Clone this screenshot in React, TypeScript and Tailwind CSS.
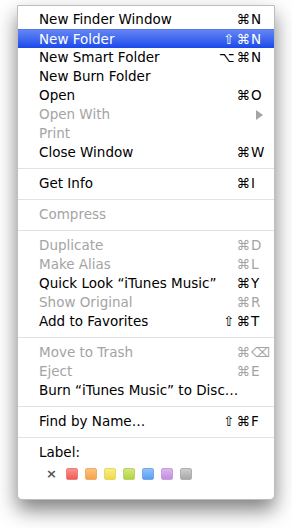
import React from 'react';

type Item =
  | { kind: 'sep' }
  | {
      kind: 'item';
      label: string;
      mods?: string;
      keyCap?: string;
      disabled?: boolean;
      active?: boolean;
      submenu?: boolean;
    };

const ITEMS: Item[] = [
  { kind: 'item', label: 'New Finder Window', mods: '⌘', keyCap: 'N' },
  { kind: 'item', label: 'New Folder', mods: '⇧⌘', keyCap: 'N', active: true },
  { kind: 'item', label: 'New Smart Folder', mods: '⌥⌘', keyCap: 'N' },
  { kind: 'item', label: 'New Burn Folder' },
  { kind: 'item', label: 'Open', mods: '⌘', keyCap: 'O' },
  { kind: 'item', label: 'Open With', disabled: true, submenu: true },
  { kind: 'item', label: 'Print', disabled: true },
  { kind: 'item', label: 'Close Window', mods: '⌘', keyCap: 'W' },
  { kind: 'sep' },
  { kind: 'item', label: 'Get Info', mods: '⌘', keyCap: 'I' },
  { kind: 'sep' },
  { kind: 'item', label: 'Compress', disabled: true },
  { kind: 'sep' },
  { kind: 'item', label: 'Duplicate', mods: '⌘', keyCap: 'D', disabled: true },
  { kind: 'item', label: 'Make Alias', mods: '⌘', keyCap: 'L', disabled: true },
  { kind: 'item', label: 'Quick Look “iTunes Music”', mods: '⌘', keyCap: 'Y' },
  { kind: 'item', label: 'Show Original', mods: '⌘', keyCap: 'R', disabled: true },
  { kind: 'item', label: 'Add to Favorites', mods: '⇧⌘', keyCap: 'T' },
  { kind: 'sep' },
  { kind: 'item', label: 'Move to Trash', mods: '⌘', keyCap: '⌫', disabled: true },
  { kind: 'item', label: 'Eject', mods: '⌘', keyCap: 'E', disabled: true },
  { kind: 'item', label: 'Burn “iTunes Music” to Disc…' },
  { kind: 'sep' },
  { kind: 'item', label: 'Find by Name…', mods: '⇧⌘', keyCap: 'F' },
  { kind: 'sep' },
];

const SWATCHES = [
  'from-[#fb8f8b] to-[#f25a55] border-[#e8807c]',
  'from-[#fcc27c] to-[#f5a24a] border-[#eeae6a]',
  'from-[#f8ee82] to-[#eedb45] border-[#e5d86a]',
  'from-[#d3e77e] to-[#b2d344] border-[#b9d46a]',
  'from-[#8fc2fb] to-[#5a9cf4] border-[#78a8e8]',
  'from-[#dcb6ee] to-[#c18fdd] border-[#c5a0dc]',
  'from-[#cdcdcd] to-[#a9a9a9] border-[#b0b0b0]',
];

function MenuRow({ item }: { item: Extract<Item, { kind: 'item' }> }) {
  const color = item.active ? 'text-white' : item.disabled ? 'text-[#a4a4a4]' : 'text-black';
  const mods = item.mods ? Array.from(item.mods) : [];
  return (
    <div
      className={`flex h-[19px] items-center pl-[21px] ${color} ${
        item.active ? 'bg-gradient-to-b from-[#6584f4] to-[#1a48ea] border-t border-[#5577ef]' : ''
      }`}
    >
      <span className="flex-1 whitespace-nowrap">{item.label}</span>
      <span className="flex whitespace-nowrap">
        {mods.map((m, i) => (
          <span key={i} className={i < mods.length - 1 ? 'mr-[2px]' : ''}>
            {m}
          </span>
        ))}
      </span>
      <span className="flex w-[24px] items-center pl-[1px] whitespace-nowrap">
        {item.keyCap}
        {item.submenu ? (
          <svg className="ml-[5px]" width="7" height="10" viewBox="0 0 7 10">
            <path d="M0 0 L7 5 L0 10 Z" fill="#a4a4a4" />
          </svg>
        ) : null}
      </span>
    </div>
  );
}

export default function App() {
  return (
    <div className="h-[528px] w-[292px] bg-white pl-[17px] pt-[5px]" style={{ fontFamily: '"DejaVu Sans", sans-serif' }}>
      <div className="h-[495px] w-[258px] rounded-b-[5px] border border-[#bdbdbd] bg-white pt-[4px] text-[13.5px] shadow-[0_10px_20px_rgba(0,0,0,0.5)]">
        {ITEMS.map((item, i) =>
          item.kind === 'sep' ? (
            <div key={i} className="flex h-[12px] items-center">
              <div className="h-px w-full bg-[#e3e3e3]" />
            </div>
          ) : (
            <MenuRow key={i} item={item} />
          ),
        )}
        <div className="flex h-[19px] items-center pl-[21px] text-black">Label:</div>
        <div className="mt-[5px] flex items-center pl-[28px]">
          <span className="w-[20px] text-[13px] font-bold leading-none text-[#555]">×</span>
          <div className="flex gap-[7px]">
            {SWATCHES.map((s, i) => (
              <span key={i} className={`h-[12px] w-[12px] rounded-[2px] border bg-gradient-to-b ${s}`} />
            ))}
          </div>
        </div>
      </div>
    </div>
  );
}
